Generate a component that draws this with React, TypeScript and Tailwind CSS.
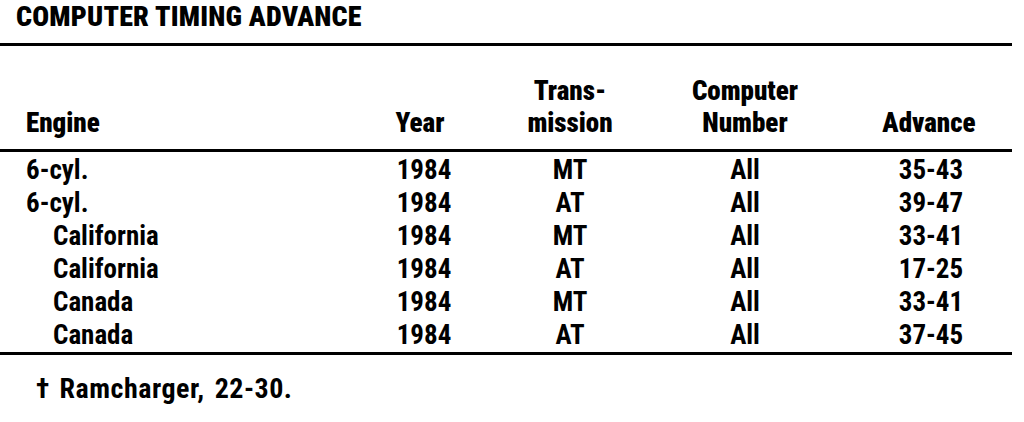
const rows = [
  { engine: "6-cyl.", sub: false, trans: "MT", adv: "35-43" },
  { engine: "6-cyl.", sub: false, trans: "AT", adv: "39-47" },
  { engine: "California", sub: true, trans: "MT", adv: "33-41" },
  { engine: "California", sub: true, trans: "AT", adv: "17-25" },
  { engine: "Canada", sub: true, trans: "MT", adv: "33-41" },
  { engine: "Canada", sub: true, trans: "AT", adv: "37-45" },
];

function Rule() {
  return <div className="w-[1012px] h-[3px] bg-black" />;
}

export default function App() {
  return (
    <div className="w-[1024px] h-[422px] overflow-hidden bg-white text-black font-['Roboto_Condensed','Roboto',sans-serif] [font-stretch:condensed]">
      {/* Title */}
      <div className="h-[43px] pt-[3px] pl-[16px]">
        <h1 className="text-[28px] leading-[28px] font-black tracking-[0.2px]">
          COMPUTER TIMING ADVANCE
        </h1>
      </div>
      <Rule />

      {/* Column heads */}
      <div className="h-[103px] pb-[10px] grid grid-cols-[360px_120px_180px_170px_194px] items-end text-[27px] leading-[32px] font-black">
        <div className="pl-[26px]">Engine</div>
        <div className="text-center">Year</div>
        <div className="text-center">
          <div>Trans-</div>
          <div>mission</div>
        </div>
        <div className="text-center">
          <div>Computer</div>
          <div>Number</div>
        </div>
        <div className="text-center pl-[4px]">Advance</div>
      </div>
      <Rule />

      {/* Body */}
      <div className="pt-[2px] text-[27px] leading-[33px] font-bold">
        {rows.map((r, i) => (
          <div key={i} className="h-[33px] grid grid-cols-[360px_120px_180px_170px_194px]">
            <div className={r.sub ? "pl-[53px]" : "pl-[26px]"}>{r.engine}</div>
            <div className="text-center pl-[8px]">1984</div>
            <div className="text-center">{r.trans}</div>
            <div className="text-center">All</div>
            <div className="text-center pl-[8px]">{r.adv}</div>
          </div>
        ))}
      </div>
      <Rule />

      {/* Footnote */}
      <div className="mt-[18px] pl-[36px] text-[28px] leading-[32px] font-bold tracking-[0.5px] [word-spacing:3px]">
        † Ramcharger, 22-30.
      </div>
    </div>
  );
}
